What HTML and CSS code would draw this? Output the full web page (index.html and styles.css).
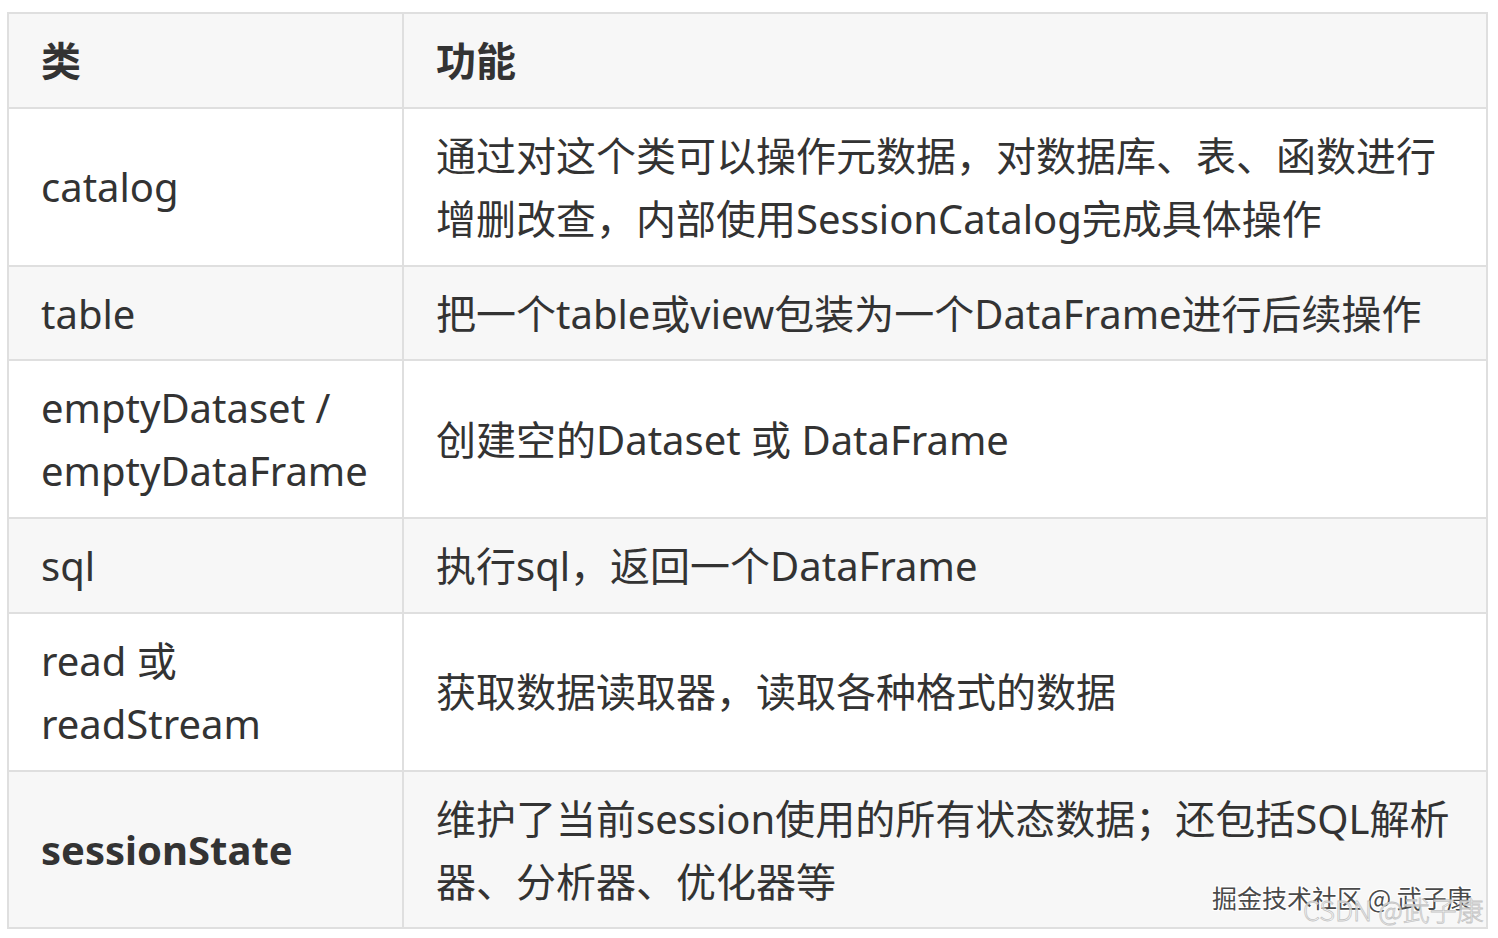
FILE: index.html
```html
<!DOCTYPE html>
<html lang="zh-CN">
<head>
<meta charset="utf-8">
<title>SparkSession</title>
<link rel="stylesheet" href="styles.css">
</head>
<body>
<div class="page">
  <table class="api">
    <colgroup>
      <col class="c1">
      <col class="c2">
    </colgroup>
    <thead>
      <tr><th>类</th><th>功能</th></tr>
    </thead>
    <tbody>
      <tr><td>catalog</td><td>通过对这个类可以操作元数据，对数据库、表、函数进行增删改查，内部使用SessionCatalog完成具体操作</td></tr>
      <tr><td>table</td><td>把一个table或view包装为一个DataFrame进行后续操作</td></tr>
      <tr><td>emptyDataset / emptyDataFrame</td><td>创建空的Dataset 或 DataFrame</td></tr>
      <tr><td>sql</td><td>执行sql，返回一个DataFrame</td></tr>
      <tr><td>read 或 readStream</td><td>获取数据读取器，读取各种格式的数据</td></tr>
      <tr><td><strong>sessionState</strong></td><td>维护了当前session使用的所有状态数据；还包括SQL解析器、分析器、优化器等</td></tr>
    </tbody>
  </table>
  <div class="wm wm-juejin">掘金技术社区 @ 武子康</div>
  <div class="wm wm-csdn">CSDN @武子康</div>
</div>
</body>
</html>
```

FILE: styles.css
```css
html, body {
  margin: 0;
  padding: 0;
  background: #ffffff;
}

.page {
  position: relative;
  width: 1498px;
  height: 938px;
  padding: 12px 0 0 7px;
  box-sizing: border-box;
}

.api {
  border-collapse: collapse;
  table-layout: fixed;
  width: 1481px;
  font-family: "Noto Sans", "Noto Sans CJK SC", sans-serif;
  font-size: 40px;
  line-height: 63px;
  color: #333333;
}

.api col.c1 { width: 395px; }

.api th,
.api td {
  border: 2px solid #dfdfdf;
  padding: 15px 32px 14.75px;
  text-align: left;
  vertical-align: middle;
}

.api th {
  font-weight: 700;
  background: #f7f7f7;
}

.api tbody tr:nth-child(even) td {
  background: #f7f7f7;
}

.api strong {
  font-weight: 700;
}

.wm {
  position: absolute;
  white-space: nowrap;
  font-family: "Noto Sans CJK SC", sans-serif;
}

.wm-juejin {
  left: 1212px;
  top: 881px;
  font-size: 25px;
  line-height: 32px;
  color: #4a4a4a;
  text-shadow: 1px 1px 0 #ffffff, -1px -1px 0 #ffffff, 1px -1px 0 #ffffff, -1px 1px 0 #ffffff;
}

.wm-csdn {
  left: 1303px;
  top: 894px;
  font-size: 27px;
  line-height: 32px;
  color: rgba(255, 255, 255, 0.6);
  -webkit-text-stroke: 0.8px #c4c4c4;
  font-weight: 300;
}
```
